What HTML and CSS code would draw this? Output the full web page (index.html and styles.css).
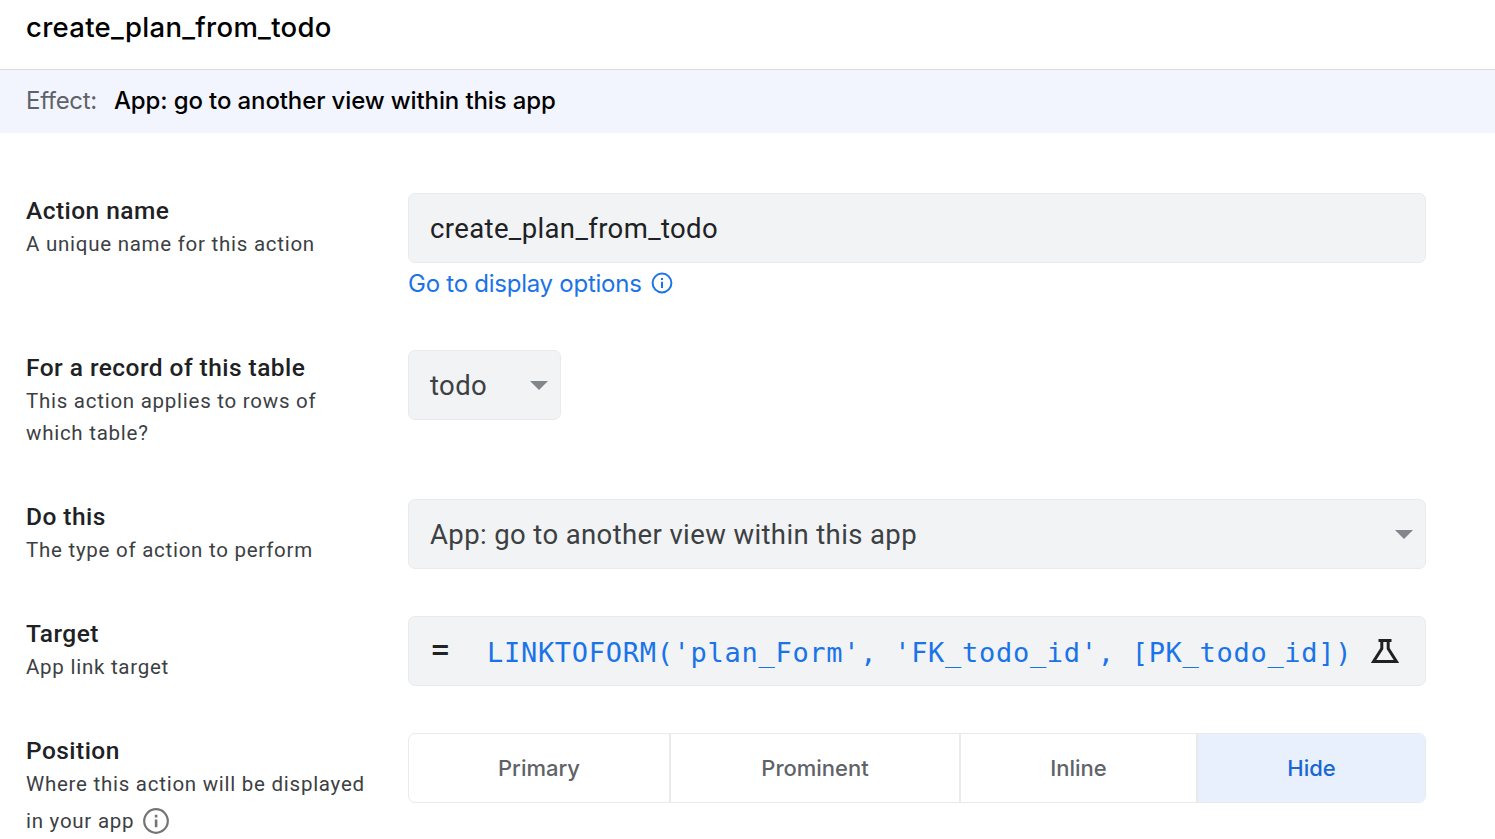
FILE: index.html
```html
<!DOCTYPE html>
<html lang="en">
<head>
<meta charset="utf-8">
<title>create_plan_from_todo</title>
<link rel="stylesheet" href="styles.css">
</head>
<body>
<header class="header"><h1 class="title">create_plan_from_todo</h1></header>
<div class="effect"><span class="effect-label">Effect:</span><span class="effect-value">App: go to another view within this app</span></div>
<main class="form">
  <section class="row">
    <div class="label"><h2 class="name">Action name</h2><p class="desc">A unique name for this action</p></div>
    <div class="control">
      <div class="field input"><span>create_plan_from_todo</span></div>
      <a class="link"><span>Go to display options</span><svg class="link-icon" viewBox="0 0 22 22"><circle cx="11" cy="11" r="9.4" fill="none" stroke="currentColor" stroke-width="2"/><path d="M10 6h2v2h-2zM10 9.8h2v6.2h-2z" fill="currentColor"/></svg></a>
    </div>
  </section>
  <section class="row">
    <div class="label two-line"><h2 class="name">For a record of this table</h2><p class="desc">This action applies to rows of<br>which table?</p></div>
    <div class="control"><div class="field select small"><span>todo</span><i class="caret"></i></div></div>
  </section>
  <section class="row">
    <div class="label"><h2 class="name">Do this</h2><p class="desc">The type of action to perform</p></div>
    <div class="control"><div class="field select"><span>App: go to another view within this app</span><i class="caret"></i></div></div>
  </section>
  <section class="row">
    <div class="label"><h2 class="name">Target</h2><p class="desc">App link target</p></div>
    <div class="control"><div class="field formula">
      <span class="equals">=</span>
      <code class="code">LINKTOFORM('plan_Form', 'FK_todo_id', [PK_todo_id])</code>
      <svg class="flask" viewBox="0 0 28 26"><path d="M7.5 2.4h13M10.8 2.6v8L2.6 23.4h22.8L17.2 10.6v-8" fill="none" stroke="#202124" stroke-width="3"/></svg>
    </div></div>
  </section>
  <section class="row">
    <div class="label"><h2 class="name">Position</h2><p class="desc">Where this action will be displayed</p><p class="desc with-icon"><span>in your app</span><svg class="info" viewBox="0 0 26 26"><circle cx="13" cy="13" r="11.8" fill="none" stroke="currentColor" stroke-width="2.2"/><path d="M11.8 6.8h2.6v2.6h-2.6zM11.8 11.6h2.6v7.6h-2.6z" fill="currentColor"/></svg></p></div>
    <div class="control"><div class="segments"><div class="seg">Primary</div><div class="seg">Prominent</div><div class="seg">Inline</div><div class="seg active">Hide</div></div></div>
  </section>
</main>
</body>
</html>
```
FILE: styles.css
```css
* { box-sizing: border-box; }
html { overflow: hidden; }
body { margin: 0; height: 839px; overflow: hidden; background: #fff; color: #202124; font-family: Roboto, sans-serif; }
h1, h2, p { margin: 0; font-weight: 500; }
.header { height: 70px; padding: 7px 26px; border-bottom: 1px solid #dadce0; }
.title { font: 500 27.5px/40px Inter, sans-serif; letter-spacing: 0.3px; color: #000; }
.effect { height: 63px; padding: 0 26px 2px; display: flex; align-items: center; gap: 17px; background: #f2f5fe; font: 400 24px/32px Inter, sans-serif; letter-spacing: -0.3px; }
.effect-label { color: #5f6368; }
.effect-value { color: #000; font-weight: 500; letter-spacing: -0.12px; }
.form { padding: 60px 69px 0 26px; display: flex; flex-direction: column; gap: 47px; }
.row { display: grid; grid-template-columns: 382px 1018px; align-items: start; }
.two-line { padding-bottom: 3px; }
.name { height: 35px; font: 500 24.5px/36px Roboto, sans-serif; letter-spacing: 0.45px; }
.desc { font: 400 20.5px/32px Roboto, sans-serif; letter-spacing: 0.74px; color: #3c4043; white-space: nowrap; }
.with-icon { display: flex; align-items: center; gap: 9px; height: 42px; }
.info { width: 26px; height: 26px; color: #757575; }
.field { height: 70px; padding: 0 12px 0 21px; display: flex; align-items: center; border: 1px solid #e8eaed; border-radius: 7px; background: #f1f3f4; font-size: 27.5px; letter-spacing: 0.38px; white-space: nowrap; }
.select { justify-content: space-between; color: #3c4043; }
.small { width: 153px; }
.caret { border: 9px solid transparent; border-top-color: #80868b; border-bottom: 0; }
.link { height: 40px; padding-top: 1px; display: flex; align-items: center; gap: 9px; color: #1a73e8; font: 400 24px/32px Inter, sans-serif; letter-spacing: -0.25px; }
.link-icon { width: 22px; height: 22px; margin-bottom: 1px; }
.equals { width: 57px; font-weight: 400; font-size: 37px; line-height: 40px; padding-bottom: 2px; }
.code { width: 872px; padding-top: 3px; color: #1a73e8; font: 400 27px/40px "DejaVu Sans Mono", monospace; letter-spacing: 0.71px; }
.flask { width: 28px; height: 26px; margin-left: 12px; }
.segments { display: grid; grid-template-columns: 262px 290px 237px 229px; height: 70px; border: 1px solid #e8eaed; border-radius: 7px; overflow: hidden; }
.seg { display: flex; align-items: center; justify-content: center; border-right: 2px solid #e8eaed; color: #5f6368; font: 500 22px/32px Inter, sans-serif; letter-spacing: 0; }
.active { padding-right: 2px; border-right: 0; background: #e8f0fe; color: #1967d2; }
```
